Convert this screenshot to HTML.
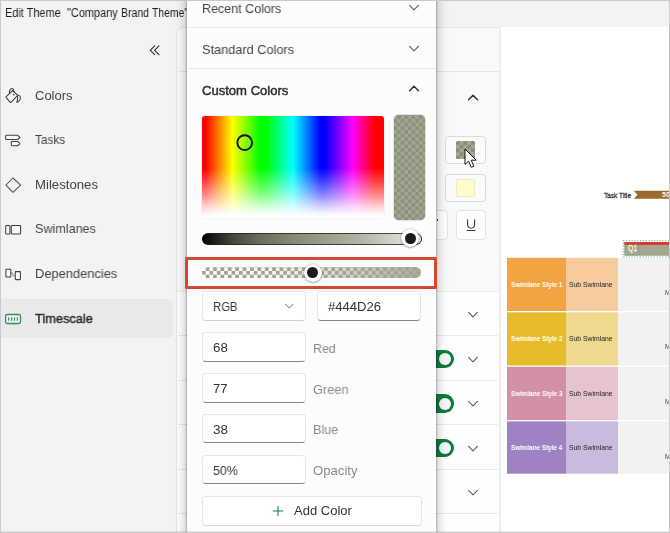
<!DOCTYPE html>
<html lang="en"><head><meta charset="utf-8"><title>Edit Theme</title>
<style>
html,body{margin:0;padding:0;background:#f3f3f3;}
body{width:670px;height:533px;overflow:hidden;font-family:"Liberation Sans",sans-serif;}
#app{position:relative;width:670px;height:533px;overflow:hidden;background:#f3f3f3;}
#app *{box-sizing:border-box;}
.abs,.t,#app svg{position:absolute;}
.t{white-space:pre;transform-origin:0 0;will-change:transform;line-height:normal;font-family:"Liberation Sans",sans-serif;}
#frame{left:0;top:0;width:670px;height:533px;border:1px solid #cacaca;box-shadow:inset 0 -1px 0 0 rgba(0,0,0,.07);z-index:50;pointer-events:none;}
#sel{left:1px;top:299px;width:172px;height:38.5px;background:#e9e9e9;border-radius:0 5px 5px 0;}
#mid{left:176px;top:27px;width:323.5px;height:520px;background:#f9f9f9;border:1px solid #e4e4e4;border-right:none;border-radius:7px 0 0 0;}
#midlist{left:177px;top:291px;width:322px;height:250px;background:#fefefe;}
#midedge{left:498.5px;top:27px;width:2.5px;height:510px;background:#ececec;}
#prev{left:501px;top:27px;width:168px;height:510px;background:#fff;}
.hl{height:1px;background:#e9e9e9;}
.btn{border:1px solid #dcdcdc;border-radius:4px;background:#fbfbfb;}
.chk{background-color:#a3a592;background-image:conic-gradient(#8e907c 25%,transparent 0 50%,#8e907c 0 75%,transparent 0);background-size:7.3px 7.3px;}
#popup{left:186.6px;top:-12px;width:249.6px;height:560px;background:#fcfcfc;box-shadow:0 0 0.8px 1.3px rgba(0,0,0,.17),0 0 11px 1px rgba(0,0,0,.26);}
.pdiv{left:187.5px;width:248px;height:1px;background:#e6e6e6;}
.inp{background:#fff;border:1px solid #e6e6e6;border-radius:4px;}
.inp.num,.inp.hex{border-bottom:1.4px solid #868686;}
.inp.cmb{border-bottom-color:#cfcfcf;}
#spec{left:202px;top:116px;width:182.4px;height:102px;border-radius:3px;overflow:hidden;box-shadow:0 0 0 0.6px #e9e9e9;
 background:linear-gradient(to bottom,rgba(255,255,255,0) 0%,rgba(255,255,255,0) 51%,rgba(255,255,255,.25) 64%,rgba(255,255,255,.55) 78%,rgba(255,255,255,.8) 88%,rgba(255,255,255,.95) 95%,rgba(255,255,255,1) 99%),
 linear-gradient(to right,#f00 0%,#f00 2%,#ff0 16.67%,#0f0 32%,#0f0 35%,#0ff 50%,#00f 65%,#00f 67.5%,#f0f 82.8%,#f00 95%,#f00 100%);}
#pv{left:394.3px;top:114.8px;width:30.6px;height:105.4px;border-radius:4.5px;background-position:-0.6px 0.4px;box-shadow:0 0 0 0.5px rgba(150,152,135,.5);}
#vbar{left:202px;top:233px;width:219.6px;height:12px;border-radius:6px;border:1px solid rgba(35,35,30,.8);border-left-color:#000;
 background:linear-gradient(to right,#000 0%,#1c1d16 5%,#47483c 14%,#6b6c5b 26%,#888976 42%,#9fa08d 58%,#b6b7a8 74%,#d4d4cb 88%,#f2f2ee 97%);}
#obar{left:202px;top:267px;width:219.4px;height:11.4px;border-radius:6px;overflow:hidden;background:#fff;}
.thumb{width:18px;height:18px;border-radius:50%;background:#fff;box-shadow:0 0 2px rgba(0,0,0,.35),0 1px 2px rgba(0,0,0,.25);}
.thumb:after{content:"";position:absolute;left:3.6px;top:3.6px;width:10.8px;height:10.8px;border-radius:50%;background:#1a1a1a;}
#redbox{left:185px;top:256.6px;width:252px;height:32.8px;border:3.6px solid #d14a34;border-radius:1px;}

</style></head>
<body>
<div id="app">
<!-- sidebar -->
<div id="sel" class="abs"></div>
<!-- sidebar icons (page coordinates) -->
<svg style="left:0;top:0" width="176" height="533" viewBox="0 0 176 533" fill="none" stroke="#3f3f3f" stroke-width="1.05" stroke-linecap="round" stroke-linejoin="round">
 <!-- collapse -->
 <path d="M154.6 45.9 L150.3 50.3 L154.6 54.7 M158.9 45.9 L154.6 50.3 L158.9 54.7" stroke="#333" stroke-width="1.2"/>
 <!-- Colors: paint bucket -->
 <path d="M6.2 96.6 L12.7 90.5 L17.7 95.3 L11 102.3 Q10.6 102.6 10.2 102.3 L6.2 97.6 Q5.8 97.1 6.2 96.6 Z"/>
 <path d="M9.5 93.3 C9 90.4 10.4 88.5 11.8 88.5 C13.2 88.6 14.1 90 13.9 91.7"/>
 <circle cx="13.7" cy="94.6" r="0.85" fill="#3f3f3f" stroke="none"/>
 <path d="M17.8 94.9 L20.2 96.1 Q20.8 99.2 19.5 100.5 Q18.4 101.8 16.9 102.4 Q17.9 99.6 17.6 96"/>
 <!-- Tasks -->
 <path d="M6.6 135.3 H17.8 L20 137.4 L17.8 139.5 H6.6 Q5.6 139.5 5.6 138.5 V136.3 Q5.6 135.3 6.6 135.3 Z" fill="#fbfbfb"/>
 <path d="M12.2 141.5 H17.8 L20 143.6 L17.8 145.7 H12.2 Q11.3 145.7 11.3 144.8 V142.4 Q11.3 141.5 12.2 141.5 Z" fill="#fbfbfb"/>
 <!-- Milestones -->
 <path d="M13 178 L20.6 185.2 L13 192.4 L5.9 185.2 Z" stroke="#555"/>
 <!-- Swimlanes -->
 <rect x="5.7" y="225.4" width="4.2" height="8.7" rx="0.9" fill="#fafafa"/>
 <rect x="11.3" y="225.4" width="9.3" height="8.7" rx="0.9" fill="#f8f8f8"/>
 <!-- Dependencies -->
 <rect x="5.9" y="269.3" width="4.9" height="7.6" rx="0.5" fill="#fbfbfb"/>
 <rect x="15.3" y="271.6" width="5.1" height="8" rx="0.5" fill="#fbfbfb"/>
 <path d="M11 272.4 Q12.8 272.4 12.9 274.4 Q13 276.4 15.1 276.4" stroke="#777" stroke-width="0.95"/>
 <!-- Timescale -->
 <rect x="5.6" y="314.5" width="14.9" height="9" rx="1.7" stroke="#2a9558" stroke-width="1.3" fill="#f4f4f4"/>
 <path d="M8.7 317.2 V320.8 M11.6 317.2 V320.8 M14.5 317.2 V320.8 M17.4 317.2 V320.8" stroke="#2a9558" stroke-width="1.2" stroke-linecap="butt"/>
</svg>

<!-- middle panel -->
<div id="mid" class="abs"></div>
<div id="midlist" class="abs"></div>
<div id="midedge" class="abs"></div>
<div id="prev" class="abs"></div>
<div class="abs hl" style="left:178px;top:71.3px;width:320.5px;background:#e6e6e6"></div>
<div class="abs hl" style="left:178px;top:290.6px;width:320.5px;background:#ededed"></div>
<div class="abs hl" style="left:178px;top:335px;width:319.5px"></div>
<div class="abs hl" style="left:178px;top:379.6px;width:319.5px"></div>
<div class="abs hl" style="left:178px;top:424px;width:319.5px"></div>
<div class="abs hl" style="left:178px;top:468.8px;width:319.5px"></div>
<div class="abs hl" style="left:178px;top:513.3px;width:319.5px"></div>
<!-- panel chevron up -->
<svg style="left:466.8px;top:92.8px" width="12" height="9" viewBox="0 0 12 9" fill="none" stroke="#2b2b2b" stroke-width="1.35" stroke-linecap="round" stroke-linejoin="round"><path d="M1.5 6.8 L6 2.3 L10.5 6.8"/></svg>
<!-- row chevrons down -->
<svg style="left:466.6px;top:310px" width="12" height="9" viewBox="0 0 12 9" fill="none" stroke="#5f5f5f" stroke-width="1.15" stroke-linecap="round" stroke-linejoin="round"><path d="M1.6 2.4 L6 6.8 L10.4 2.4"/></svg>
<svg style="left:466.6px;top:354.5px" width="12" height="9" viewBox="0 0 12 9" fill="none" stroke="#5f5f5f" stroke-width="1.15" stroke-linecap="round" stroke-linejoin="round"><path d="M1.6 2.4 L6 6.8 L10.4 2.4"/></svg>
<svg style="left:466.6px;top:399.2px" width="12" height="9" viewBox="0 0 12 9" fill="none" stroke="#5f5f5f" stroke-width="1.15" stroke-linecap="round" stroke-linejoin="round"><path d="M1.6 2.4 L6 6.8 L10.4 2.4"/></svg>
<svg style="left:466.6px;top:443.6px" width="12" height="9" viewBox="0 0 12 9" fill="none" stroke="#5f5f5f" stroke-width="1.15" stroke-linecap="round" stroke-linejoin="round"><path d="M1.6 2.4 L6 6.8 L10.4 2.4"/></svg>
<svg style="left:466.6px;top:488.3px" width="12" height="9" viewBox="0 0 12 9" fill="none" stroke="#5f5f5f" stroke-width="1.15" stroke-linecap="round" stroke-linejoin="round"><path d="M1.6 2.4 L6 6.8 L10.4 2.4"/></svg>
<!-- toggles -->
<div class="abs" style="left:418px;top:349.8px;width:36px;height:18.4px;border-radius:9.2px;background:#0f7c3b"></div>
<div class="abs" style="left:438.85px;top:353.25px;width:11.9px;height:11.9px;border-radius:50%;background:#f7f7f7"></div>
<div class="abs" style="left:418px;top:394.3px;width:36px;height:18.4px;border-radius:9.2px;background:#0f7c3b"></div>
<div class="abs" style="left:438.85px;top:397.75px;width:11.9px;height:11.9px;border-radius:50%;background:#f7f7f7"></div>
<div class="abs" style="left:418px;top:438.8px;width:36px;height:18.4px;border-radius:9.2px;background:#0f7c3b"></div>
<div class="abs" style="left:438.85px;top:442.25px;width:11.9px;height:11.9px;border-radius:50%;background:#f7f7f7"></div>
<!-- colour buttons -->
<div class="abs btn" style="left:445.3px;top:136px;width:40.4px;height:27.6px"></div>
<div class="abs chk" style="left:455.9px;top:140.5px;width:18.7px;height:18.4px;border-radius:1.5px;background-color:#a6a895;background-size:7.5px 7.5px;background-position:3.75px 0;background-image:conic-gradient(#8b8d78 25%,transparent 0 50%,#8b8d78 0 75%,transparent 0)"></div>
<div class="abs btn" style="left:445.3px;top:174.4px;width:40.4px;height:27.2px"></div>
<div class="abs" style="left:456px;top:178.7px;width:18.8px;height:18.8px;border-radius:1.5px;background:#fffbcb;border:1px solid #eeeac0"></div>
<div class="abs btn" style="left:410px;top:210.4px;width:37.6px;height:29.4px;background:#fff;border-color:#e4e4e4"></div>
<div class="abs" style="left:436.6px;top:219.4px;width:1.3px;height:1.3px;background:#333"></div>
<div class="abs btn" style="left:456.3px;top:210.4px;width:29.6px;height:29.4px;background:#fff;border-color:#e4e4e4"></div>
<svg style="left:464px;top:217px" width="15" height="16" viewBox="0 0 15 16" fill="none" stroke="#333" stroke-width="1.05" stroke-linecap="round"><path d="M3.6 2.7 V7.6 Q3.6 11.2 7.1 11.2 Q10.6 11.2 10.6 7.6 V2.7"/><path d="M3.2 13.4 H11"/></svg>

<!-- preview -->
<svg style="left:501px;top:27px" width="168" height="506" viewBox="501 27 168 506">
 <path d="M633.8 190.8 H669 V198.8 H633.8 L637.6 194.8 Z" fill="#9b6a2c"/>
 <!-- Q1 -->
 <rect x="624.3" y="242.2" width="45" height="13.6" fill="#a4a692"/>
 <rect x="624.3" y="242.2" width="45" height="2.5" fill="#e8261c"/>
 <rect x="623.2" y="240.8" width="47" height="16.2" fill="none" stroke="#4aa277" stroke-opacity=".85" stroke-width="1.1" stroke-dasharray="1.2 1.6"/>
 <rect x="624.9" y="243.4" width="13.8" height="11.6" rx="1.4" fill="none" stroke="#4aa277" stroke-opacity=".8" stroke-width="0.9" stroke-dasharray="1.2 1.5"/>
 <!-- swimlanes -->
 <rect x="507" y="257.8" width="59" height="53.2" fill="#f2a444"/><rect x="566" y="257.8" width="52" height="53.2" fill="#f6cb9d"/><rect x="618" y="257.8" width="51" height="53.2" fill="#f2f2f2"/>
 <rect x="507" y="312.3" width="59" height="53.2" fill="#e6bc2c"/><rect x="566" y="312.3" width="52" height="53.2" fill="#eed98f"/><rect x="618" y="312.3" width="51" height="53.2" fill="#f2f2f2"/>
 <rect x="507" y="366.8" width="59" height="53.2" fill="#d190a6"/><rect x="566" y="366.8" width="52" height="53.2" fill="#e6c3cf"/><rect x="618" y="366.8" width="51" height="53.2" fill="#f2f2f2"/>
 <rect x="507" y="421.3" width="59" height="52.4" fill="#9d83c3"/><rect x="566" y="421.3" width="52" height="52.4" fill="#c9bbde"/><rect x="618" y="421.3" width="51" height="52.4" fill="#f2f2f2"/>
</svg>

<span id="t_title" class="t" style="left:4.58px;top:6.14px;font-size:12px;font-weight:400;color:#1f1f1f;transform:scaleX(0.9105)">Edit Theme</span>
<span id="t_title2" class="t" style="left:66.82px;top:6.14px;font-size:12px;font-weight:400;color:#1f1f1f;transform:scaleX(0.9123)">"Company</span>
<span id="t_title3" class="t" style="left:120.56px;top:6.14px;font-size:12px;font-weight:400;color:#1f1f1f;transform:scaleX(0.8753)">Brand</span>
<span id="t_title4" class="t" style="left:152.00px;top:6.14px;font-size:12px;font-weight:400;color:#1f1f1f;transform:scaleX(0.8644)">Theme"</span>
<span id="t_colors" class="t" style="left:35.27px;top:87.94px;font-size:13px;font-weight:400;color:#444;transform:scaleX(0.9939)">Colors</span>
<span id="t_tasks" class="t" style="left:34.87px;top:132.24px;font-size:13px;font-weight:400;color:#444;transform:scaleX(0.9051)">Tasks</span>
<span id="t_miles" class="t" style="left:35.07px;top:177.24px;font-size:13px;font-weight:400;color:#444;transform:scaleX(1.0141)">Milestones</span>
<span id="t_swim" class="t" style="left:35.16px;top:221.44px;font-size:13px;font-weight:400;color:#444;transform:scaleX(0.9697)">Swimlanes</span>
<span id="t_deps" class="t" style="left:34.97px;top:265.94px;font-size:13px;font-weight:400;color:#444;transform:scaleX(0.9905)">Dependencies</span>
<span id="t_time" class="t" style="left:35.10px;top:310.54px;font-size:13px;font-weight:400;color:#2e2e2e;transform:scaleX(0.9840);-webkit-text-stroke:0.47px #2e2e2e">Timescale</span>
<span id="t_task" class="t" style="left:603.78px;top:191.02px;font-size:7.6px;font-weight:400;color:#2a2a2a;transform:scaleX(0.8583);-webkit-text-stroke:0.27px #2a2a2a">Task Title</span>
<span id="t_p50" class="t" style="left:661.80px;top:191.16px;font-size:7px;font-weight:700;color:#fff;transform:scaleX(0.9604)">50%</span>
<span id="t_q1" class="t" style="left:628.16px;top:244.08px;font-size:8.2px;font-weight:400;color:#fff8cc;transform:scaleX(0.8508);-webkit-text-stroke:0.30px #fff8cc">Q1</span>
<span id="t_sw1" class="t" style="left:510.69px;top:280.63px;font-size:6.6px;font-weight:700;color:#fff;transform:scaleX(0.9614)">Swimlane Style 1</span>
<span id="t_sub1" class="t" style="left:569.35px;top:280.63px;font-size:6.6px;font-weight:400;color:#262626;transform:scaleX(1.0353)">Sub Swimlane</span>
<span id="t_m1" class="t" style="left:664.80px;top:288.83px;font-size:6.6px;font-weight:400;color:#444;transform:scaleX(1.0000)">M</span>
<span id="t_sw2" class="t" style="left:510.69px;top:335.03px;font-size:6.6px;font-weight:700;color:#fff;transform:scaleX(0.9636)">Swimlane Style 2</span>
<span id="t_sub2" class="t" style="left:569.35px;top:335.03px;font-size:6.6px;font-weight:400;color:#262626;transform:scaleX(1.0353)">Sub Swimlane</span>
<span id="t_m2" class="t" style="left:664.80px;top:343.23px;font-size:6.6px;font-weight:400;color:#444;transform:scaleX(1.0000)">M</span>
<span id="t_sw3" class="t" style="left:510.69px;top:389.83px;font-size:6.6px;font-weight:700;color:#fff;transform:scaleX(0.9632)">Swimlane Style 3</span>
<span id="t_sub3" class="t" style="left:569.35px;top:389.83px;font-size:6.6px;font-weight:400;color:#262626;transform:scaleX(1.0353)">Sub Swimlane</span>
<span id="t_m3" class="t" style="left:664.80px;top:398.03px;font-size:6.6px;font-weight:400;color:#444;transform:scaleX(1.0000)">M</span>
<span id="t_sw4" class="t" style="left:510.69px;top:444.33px;font-size:6.6px;font-weight:700;color:#fff;transform:scaleX(0.9572)">Swimlane Style 4</span>
<span id="t_sub4" class="t" style="left:569.35px;top:444.33px;font-size:6.6px;font-weight:400;color:#262626;transform:scaleX(1.0353)">Sub Swimlane</span>
<span id="t_m4" class="t" style="left:664.80px;top:452.53px;font-size:6.6px;font-weight:400;color:#444;transform:scaleX(1.0000)">M</span>
<!-- popup -->
<div id="popup" class="abs"></div>
<div class="abs pdiv" style="top:26.8px"></div>
<div class="abs pdiv" style="top:68px"></div>
<svg style="left:408px;top:3.4px" width="12" height="9" viewBox="0 0 12 9" fill="none" stroke="#5f5f5f" stroke-width="1.15" stroke-linecap="round" stroke-linejoin="round"><path d="M1.6 2.4 L6 6.8 L10.4 2.4"/></svg>
<svg style="left:408px;top:44.2px" width="12" height="9" viewBox="0 0 12 9" fill="none" stroke="#5f5f5f" stroke-width="1.15" stroke-linecap="round" stroke-linejoin="round"><path d="M1.6 2.4 L6 6.8 L10.4 2.4"/></svg>
<svg style="left:408px;top:84.4px" width="12" height="9" viewBox="0 0 12 9" fill="none" stroke="#2b2b2b" stroke-width="1.35" stroke-linecap="round" stroke-linejoin="round"><path d="M1.5 6.8 L6 2.3 L10.5 6.8"/></svg>
<div id="spec" class="abs"></div>
<svg style="left:234px;top:131.5px" width="21" height="21" viewBox="0 0 21 21" fill="none" stroke="#111" stroke-width="1.9"><circle cx="10.7" cy="10.6" r="7.4"/></svg>
<div id="pv" class="abs chk"></div>
<div id="vbar" class="abs"></div>
<div class="abs thumb" style="left:401.4px;top:229.4px"></div>
<div id="obar" class="abs"><div class="abs" style="left:0;top:0;width:100%;height:100%;background-image:conic-gradient(#a3a491 25%,transparent 0 50%,#a3a491 0 75%,transparent 0);background-size:7.4px 7.4px;background-position:0 0.3px"></div><div class="abs" style="left:0;top:0;width:100%;height:100%;background:linear-gradient(to right,rgba(163,165,146,0) 0%,rgba(163,165,146,.1) 32%,rgba(163,165,146,.4) 60%,rgba(163,165,146,.72) 85%,rgba(163,165,146,.93) 100%)"></div></div>
<div class="abs thumb" style="left:303.6px;top:263.8px"></div>
<div id="redbox" class="abs"></div>
<!-- inputs -->
<div class="abs inp cmb" style="left:202px;top:291.4px;width:103.5px;height:29.2px"></div>
<svg style="left:284px;top:302.2px" width="11" height="8" viewBox="0 0 11 8" fill="none" stroke="#6a6a6a" stroke-width="1.0" stroke-linecap="round" stroke-linejoin="round"><path d="M1.4 2.1 L5.3 6 L9.2 2.1"/></svg>
<div class="abs inp hex" style="left:317.4px;top:291.4px;width:104px;height:29.2px"></div>
<div class="abs inp num" style="left:202px;top:332.4px;width:103.5px;height:29.4px"></div>
<div class="abs inp num" style="left:202px;top:373.2px;width:103.5px;height:29.4px"></div>
<div class="abs inp num" style="left:202px;top:414.1px;width:103.5px;height:29.4px"></div>
<div class="abs inp num" style="left:202px;top:455.1px;width:103.5px;height:29.4px"></div>
<div class="abs inp" style="left:202px;top:496.4px;width:219.6px;height:29.2px;border-bottom-color:#d6d6d6"></div>
<svg style="left:271.6px;top:504.7px" width="12" height="12" viewBox="0 0 12 12" fill="none" stroke="#13803f" stroke-width="1.05" stroke-linecap="round"><path d="M6 1.2 V10.8 M1.2 6 H10.8"/></svg>
<span id="t_recent" class="t" style="left:202.00px;top:1.04px;font-size:13px;font-weight:400;color:#444;transform:scaleX(0.9632)">Recent Colors</span>
<span id="t_std" class="t" style="left:201.97px;top:42.23px;font-size:13px;font-weight:400;color:#444;transform:scaleX(0.9802)">Standard Colors</span>
<span id="t_custom" class="t" style="left:201.86px;top:82.64px;font-size:13px;font-weight:400;color:#2e2e2e;transform:scaleX(1.0048);-webkit-text-stroke:0.47px #2e2e2e">Custom Colors</span>
<span id="t_rgb" class="t" style="left:212.53px;top:298.54px;font-size:13px;font-weight:400;color:#333;transform:scaleX(0.8669)">RGB</span>
<span id="t_hex" class="t" style="left:328.07px;top:298.63px;font-size:13px;font-weight:400;color:#333;transform:scaleX(1.0055)">#444D26</span>
<span id="t_68" class="t" style="left:212.82px;top:339.54px;font-size:13px;font-weight:400;color:#333;transform:scaleX(1.0262)">68</span>
<span id="t_77" class="t" style="left:212.70px;top:380.63px;font-size:13px;font-weight:400;color:#333;transform:scaleX(0.9956)">77</span>
<span id="t_38" class="t" style="left:212.61px;top:421.74px;font-size:13px;font-weight:400;color:#333;transform:scaleX(1.0337)">38</span>
<span id="t_50" class="t" style="left:213.35px;top:462.74px;font-size:13px;font-weight:400;color:#333;transform:scaleX(0.9511)">50%</span>
<span id="t_red" class="t" style="left:313.04px;top:340.63px;font-size:13px;font-weight:400;color:#8a8a8a;transform:scaleX(0.9543)">Red</span>
<span id="t_green" class="t" style="left:312.90px;top:381.54px;font-size:13px;font-weight:400;color:#8a8a8a;transform:scaleX(0.9814)">Green</span>
<span id="t_blue" class="t" style="left:313.01px;top:422.44px;font-size:13px;font-weight:400;color:#8a8a8a;transform:scaleX(0.9709)">Blue</span>
<span id="t_opac" class="t" style="left:313.05px;top:463.24px;font-size:13px;font-weight:400;color:#8a8a8a;transform:scaleX(1.0105)">Opacity</span>
<span id="t_add" class="t" style="left:293.64px;top:503.24px;font-size:13px;font-weight:400;color:#333;transform:scaleX(1.0023)">Add Color</span>
<!-- cursor -->
<svg style="left:463.5px;top:148px;z-index:40" width="14" height="21" viewBox="0 0 14 21"><path d="M1 1 L1 16.4 L4.6 13.1 L7.3 19.3 L9.9 18.2 L7.2 12.2 L12.2 12.2 Z" fill="#fff" stroke="#111" stroke-width="1" stroke-linejoin="miter"/></svg>
<div id="frame" class="abs"></div>

</div>
</body></html>
